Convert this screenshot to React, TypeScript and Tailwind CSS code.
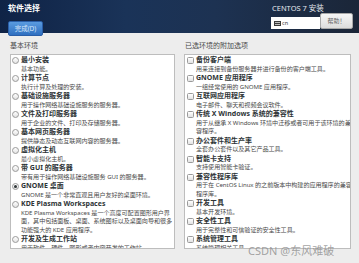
import React from 'react'

type Item = { title: string; desc: string[]; selected?: boolean }

const ENVIRONMENTS: Item[] = [
  { title: '最小安装', desc: ['基本功能。'] },
  { title: '计算节点', desc: ['执行计算及处理的安装。'] },
  { title: '基础设施服务器', desc: ['用于操作网络基础设施服务的服务器。'] },
  { title: '文件及打印服务器', desc: ['用于企业的文件、打印及存储服务器。'] },
  { title: '基本网页服务器', desc: ['提供静态及动态互联网内容的服务器。'] },
  { title: '虚拟化主机', desc: ['最小虚拟化主机。'] },
  { title: '带 GUI 的服务器', desc: ['带有用于操作网络基础设施服务 GUI 的服务器。'] },
  { title: 'GNOME 桌面', desc: ['GNOME 是一个非常直观且用户友好的桌面环境。'], selected: true },
  {
    title: 'KDE Plasma Workspaces',
    desc: [
      'KDE Plasma Workspaces 是一个高度可配置图形用户界',
      '面，其中包括面板、桌面、系统图标以及桌面向导和很多',
      '功能强大的 KDE 应用程序。',
    ],
  },
  { title: '开发及生成工作站', desc: ['用于软件、硬件、图形或者内容开发的工作站。'] },
]

const ADDONS: Item[] = [
  { title: '备份客户端', desc: ['用来连接到备份服务器并进行备份的客户端工具。'] },
  { title: 'GNOME 应用程序', desc: ['一组经常使用的 GNOME 应用程序。'] },
  { title: '互联网应用程序', desc: ['电子邮件、聊天和视频会议软件。'] },
  {
    title: '传统 X Windows 系统的兼容性',
    desc: ['用于从继承 X Windows 环境中迁移或者可用于该环境的兼', '容程序。'],
  },
  { title: '办公套件和生产率', desc: ['全套办公套件以及其它产品工具。'] },
  { title: '智能卡支持', desc: ['支持使用智能卡验证。'] },
  {
    title: '兼容性程序库',
    desc: ['用于在 CentOS Linux 的之前版本中构建的应用程序的兼容', '程序库。'],
  },
  { title: '开发工具', desc: ['基本开发环境。'] },
  { title: '安全性工具', desc: ['用于完整性和可信验证的安全性工具。'] },
  { title: '系统管理工具', desc: ['系统管理相关工具。'] },
]

function Radio({ on }: { on?: boolean }) {
  return (
    <span className="mt-[1px] flex h-[7px] w-[7px] shrink-0 items-center justify-center rounded-full border border-[#9a9a9a] bg-[linear-gradient(#ffffff,#e4e4e4)]">
      {on ? <span className="h-[3px] w-[3px] rounded-full bg-[#2e3436]" /> : null}
    </span>
  )
}

function Check() {
  return (
    <span className="mt-[1px] h-[7px] w-[7px] shrink-0 rounded-[1.5px] border border-[#9a9a9a] bg-[linear-gradient(#ffffff,#e2e2e2)]" />
  )
}

function Row({ item, kind }: { item: Item; kind: 'radio' | 'check' }) {
  return (
    <div className="flex gap-[2px] pb-[1px]">
      {kind === 'radio' ? <Radio on={item.selected} /> : <Check />}
      <div className="min-w-0">
        <div className="whitespace-nowrap text-[7px] font-bold leading-[8.5px] text-[#2e3436]">{item.title}</div>
        {item.desc.map((line) => (
          <div key={line} className="whitespace-nowrap text-[6.1px] leading-[8.5px] tracking-[-0.05px] text-[#4a4a4a]">
            {line}
          </div>
        ))}
      </div>
    </div>
  )
}

export default function App() {
  return (
    <div
      className="relative h-[263px] w-[359px] overflow-hidden bg-[#ededed]"
      style={{ fontFamily: '"Noto Sans", "Noto Sans CJK SC", sans-serif' }}
    >
      {/* top bar */}
      <div className="flex h-[33px] justify-between bg-[linear-gradient(90deg,#0f2346_0%,#1a3358_35%,#1d3252_60%,#1b2638_100%)] pl-[8px] pr-[6px]">
        <div className="pt-[3px]">
          <div className="text-[8px] font-bold leading-[10px] text-white">软件选择</div>
          <button className="h-[15px] w-[35px] rounded-[2px] border border-[#2a5ea8] bg-[linear-gradient(#5a9be0,#2f6fc0)] text-[6.5px] leading-[13px] text-[#d6e6fa]">
            完成(D)
          </button>
        </div>
        <div className="flex flex-col pt-[4px]">
          <div className="pl-[1px] text-[7.5px] leading-[9px] text-[#e6e9ee]">CENTOS 7 安装</div>
          <div className="flex items-end">
            <div className="flex h-[12px] w-[49px] items-center gap-[1px] bg-white pl-[3px]">
              <span className="flex h-[5px] w-[7px] flex-col justify-center gap-[1px] bg-[#3a3a3a] px-[1px]">
                <span className="h-[1px] w-full bg-[#bbb]" />
                <span className="h-[1px] w-full bg-[#bbb]" />
              </span>
              <span className="text-[5.5px] leading-[6px] text-[#333]">cn</span>
            </div>
            <button className="h-[16px] w-[33px] rounded-[2px] border border-[#a9a9a9] bg-[linear-gradient(#f6f6f6,#dcdcdc)] text-[6px] leading-[14px] text-[#666]">
              帮助！
            </button>
          </div>
        </div>
      </div>

      {/* body */}
      <div className="flex gap-[9px] pl-[10px] pt-[8px]">
        <div className="w-[165px]">
          <div className="pb-[4px] text-[7px] leading-[9px] text-[#4a4a4a]">基本环境</div>
          <div className="h-[195px] overflow-hidden border border-[#bdbdbd] bg-white pl-[1px] pt-[1px]">
            {ENVIRONMENTS.map((it) => (
              <Row key={it.title} item={it} kind="radio" />
            ))}
          </div>
        </div>
        <div className="w-[167px]">
          <div className="pb-[4px] pl-[1px] text-[7px] leading-[9px] text-[#4a4a4a]">已选环境的附加选项</div>
          <div className="h-[195px] overflow-hidden border border-[#bdbdbd] bg-white pl-[2px] pt-[1px]">
            {ADDONS.map((it) => (
              <Row key={it.title} item={it} kind="check" />
            ))}
          </div>
        </div>
      </div>

      {/* watermark */}
      <div className="absolute left-[248px] top-[244px] whitespace-nowrap text-[11px] leading-[13px] text-[#8e8e8e]/80">
        CSDN @东风难破
      </div>
    </div>
  )
}
